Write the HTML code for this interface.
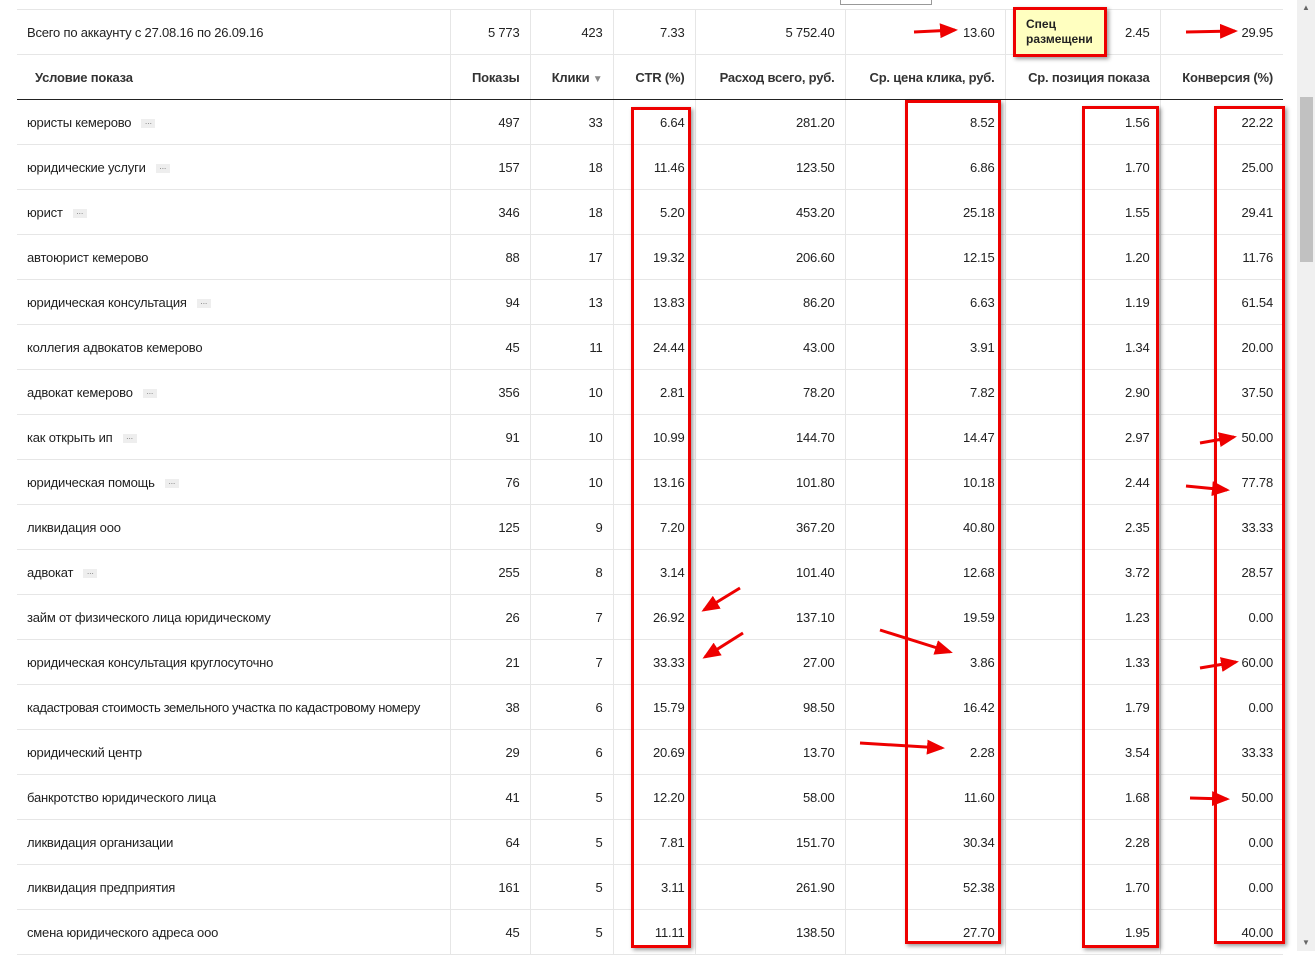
<!DOCTYPE html>
<html><head><meta charset="utf-8"><style>
html,body{margin:0;padding:0;background:#fff;width:1315px;height:951px;overflow:hidden;font-family:"Liberation Sans",Arial,sans-serif;font-size:13px;color:#222}
.t{position:absolute;left:17px;top:9px;width:1266px;border-collapse:collapse;table-layout:fixed}
.t td{height:44px;border-bottom:1px solid #e6e6e6;border-left:1px solid #e6e6e6;text-align:right;padding:0 10px 0 4px;white-space:nowrap;overflow:hidden;letter-spacing:-0.2px}
.t td:first-child{text-align:left;border-left:none;padding-left:10px}
.t tr.h td{font-weight:bold;color:#333;border-bottom:1px solid #222;height:44px}
.t tr.h td:first-child{padding-left:18px}
.d{display:inline-block;width:14px;height:9px;background:#eee;color:#888;font-size:9px;line-height:5px;text-align:center;margin-left:10px;vertical-align:middle}
.sb{position:absolute;left:1297px;top:0;width:18px;height:951px;background:#f0f0f0}
.th{position:absolute;left:1300px;top:97px;width:13px;height:165px;background:#c1c1c1}
.box{position:absolute;border:3px solid #e00;box-shadow:2px 2px 4px rgba(0,0,0,.4)}
</style></head><body>
<div style="position:absolute;left:840px;top:0;width:90px;height:4px;border:1px solid #999;border-top:none;background:#fff"></div>
<table class="t">
<colgroup><col style="width:433px"><col style="width:80px"><col style="width:83px"><col style="width:82px"><col style="width:150px"><col style="width:160px"><col style="width:155px"><col style="width:123px"></colgroup>
<tr style="border-top:1px solid #e6e6e6"><td>Всего по аккаунту с 27.08.16 по 26.09.16</td><td>5 773</td><td>423</td><td>7.33</td><td>5 752.40</td><td>13.60</td><td>2.45</td><td>29.95</td></tr>
<tr class="h"><td>Условие показа</td><td>Показы</td><td>Клики <span style="color:#888;font-size:10px">▼</span></td><td>CTR (%)</td><td>Расход всего, руб.</td><td>Ср. цена клика, руб.</td><td>Ср. позиция показа</td><td>Конверсия (%)</td></tr>
<tr><td>юристы кемерово<span class="d">...</span></td><td>497</td><td>33</td><td>6.64</td><td>281.20</td><td>8.52</td><td>1.56</td><td>22.22</td></tr>
<tr><td>юридические услуги<span class="d">...</span></td><td>157</td><td>18</td><td>11.46</td><td>123.50</td><td>6.86</td><td>1.70</td><td>25.00</td></tr>
<tr><td>юрист<span class="d">...</span></td><td>346</td><td>18</td><td>5.20</td><td>453.20</td><td>25.18</td><td>1.55</td><td>29.41</td></tr>
<tr><td>автоюрист кемерово</td><td>88</td><td>17</td><td>19.32</td><td>206.60</td><td>12.15</td><td>1.20</td><td>11.76</td></tr>
<tr><td>юридическая консультация<span class="d">...</span></td><td>94</td><td>13</td><td>13.83</td><td>86.20</td><td>6.63</td><td>1.19</td><td>61.54</td></tr>
<tr><td>коллегия адвокатов кемерово</td><td>45</td><td>11</td><td>24.44</td><td>43.00</td><td>3.91</td><td>1.34</td><td>20.00</td></tr>
<tr><td>адвокат кемерово<span class="d">...</span></td><td>356</td><td>10</td><td>2.81</td><td>78.20</td><td>7.82</td><td>2.90</td><td>37.50</td></tr>
<tr><td>как открыть ип<span class="d">...</span></td><td>91</td><td>10</td><td>10.99</td><td>144.70</td><td>14.47</td><td>2.97</td><td>50.00</td></tr>
<tr><td>юридическая помощь<span class="d">...</span></td><td>76</td><td>10</td><td>13.16</td><td>101.80</td><td>10.18</td><td>2.44</td><td>77.78</td></tr>
<tr><td>ликвидация ооо</td><td>125</td><td>9</td><td>7.20</td><td>367.20</td><td>40.80</td><td>2.35</td><td>33.33</td></tr>
<tr><td>адвокат<span class="d">...</span></td><td>255</td><td>8</td><td>3.14</td><td>101.40</td><td>12.68</td><td>3.72</td><td>28.57</td></tr>
<tr><td>займ от физического лица юридическому</td><td>26</td><td>7</td><td>26.92</td><td>137.10</td><td>19.59</td><td>1.23</td><td>0.00</td></tr>
<tr><td>юридическая консультация круглосуточно</td><td>21</td><td>7</td><td>33.33</td><td>27.00</td><td>3.86</td><td>1.33</td><td>60.00</td></tr>
<tr><td style="letter-spacing:-0.4px">кадастровая стоимость земельного участка по кадастровому номеру</td><td>38</td><td>6</td><td>15.79</td><td>98.50</td><td>16.42</td><td>1.79</td><td>0.00</td></tr>
<tr><td>юридический центр</td><td>29</td><td>6</td><td>20.69</td><td>13.70</td><td>2.28</td><td>3.54</td><td>33.33</td></tr>
<tr><td>банкротство юридического лица</td><td>41</td><td>5</td><td>12.20</td><td>58.00</td><td>11.60</td><td>1.68</td><td>50.00</td></tr>
<tr><td>ликвидация организации</td><td>64</td><td>5</td><td>7.81</td><td>151.70</td><td>30.34</td><td>2.28</td><td>0.00</td></tr>
<tr><td>ликвидация предприятия</td><td>161</td><td>5</td><td>3.11</td><td>261.90</td><td>52.38</td><td>1.70</td><td>0.00</td></tr>
<tr><td>смена юридического адреса ооо</td><td>45</td><td>5</td><td>11.11</td><td>138.50</td><td>27.70</td><td>1.95</td><td>40.00</td></tr>
</table>
<div class="box" style="left:631px;top:107px;width:54px;height:835px"></div>
<div class="box" style="left:905px;top:100px;width:90px;height:838px"></div>
<div class="box" style="left:1082px;top:106px;width:71px;height:836px"></div>
<div class="box" style="left:1214px;top:106px;width:65px;height:832px"></div>
<div style="position:absolute;left:1013px;top:7px;width:94px;height:50px;background:#ffffc0;border:3px solid #e00;box-shadow:2px 2px 4px rgba(0,0,0,.4);box-sizing:border-box;padding:7px 0 0 10px;font-size:12px;font-weight:bold;line-height:15px">Спец<br>размещени</div>
<svg width="1315" height="951" style="position:absolute;left:0;top:0" fill="#e00" stroke="#e00">
<defs><marker id="a" markerWidth="6" markerHeight="5" refX="5" refY="2.5" orient="auto"><path d="M0,0L6,2.5L0,5z" stroke="none"/></marker></defs>
<g stroke-width="3" marker-end="url(#a)">
<line x1="914" y1="32" x2="955" y2="30"/>
<line x1="1186" y1="32" x2="1235" y2="31"/>
<line x1="1200" y1="443" x2="1234" y2="437"/>
<line x1="1186" y1="486" x2="1227" y2="490"/>
<line x1="740" y1="588" x2="704" y2="610"/>
<line x1="743" y1="633" x2="705" y2="657"/>
<line x1="880" y1="630" x2="950" y2="652"/>
<line x1="1200" y1="668" x2="1236" y2="662"/>
<line x1="860" y1="743" x2="942" y2="748"/>
<line x1="1190" y1="798" x2="1227" y2="799"/>
</g></svg>
<div class="sb"></div><div class="th"></div>
<div style="position:absolute;left:1302px;top:3px;font-size:8px;color:#666">▲</div>
<div style="position:absolute;left:1302px;top:938px;font-size:8px;color:#666">▼</div>
</body></html>
